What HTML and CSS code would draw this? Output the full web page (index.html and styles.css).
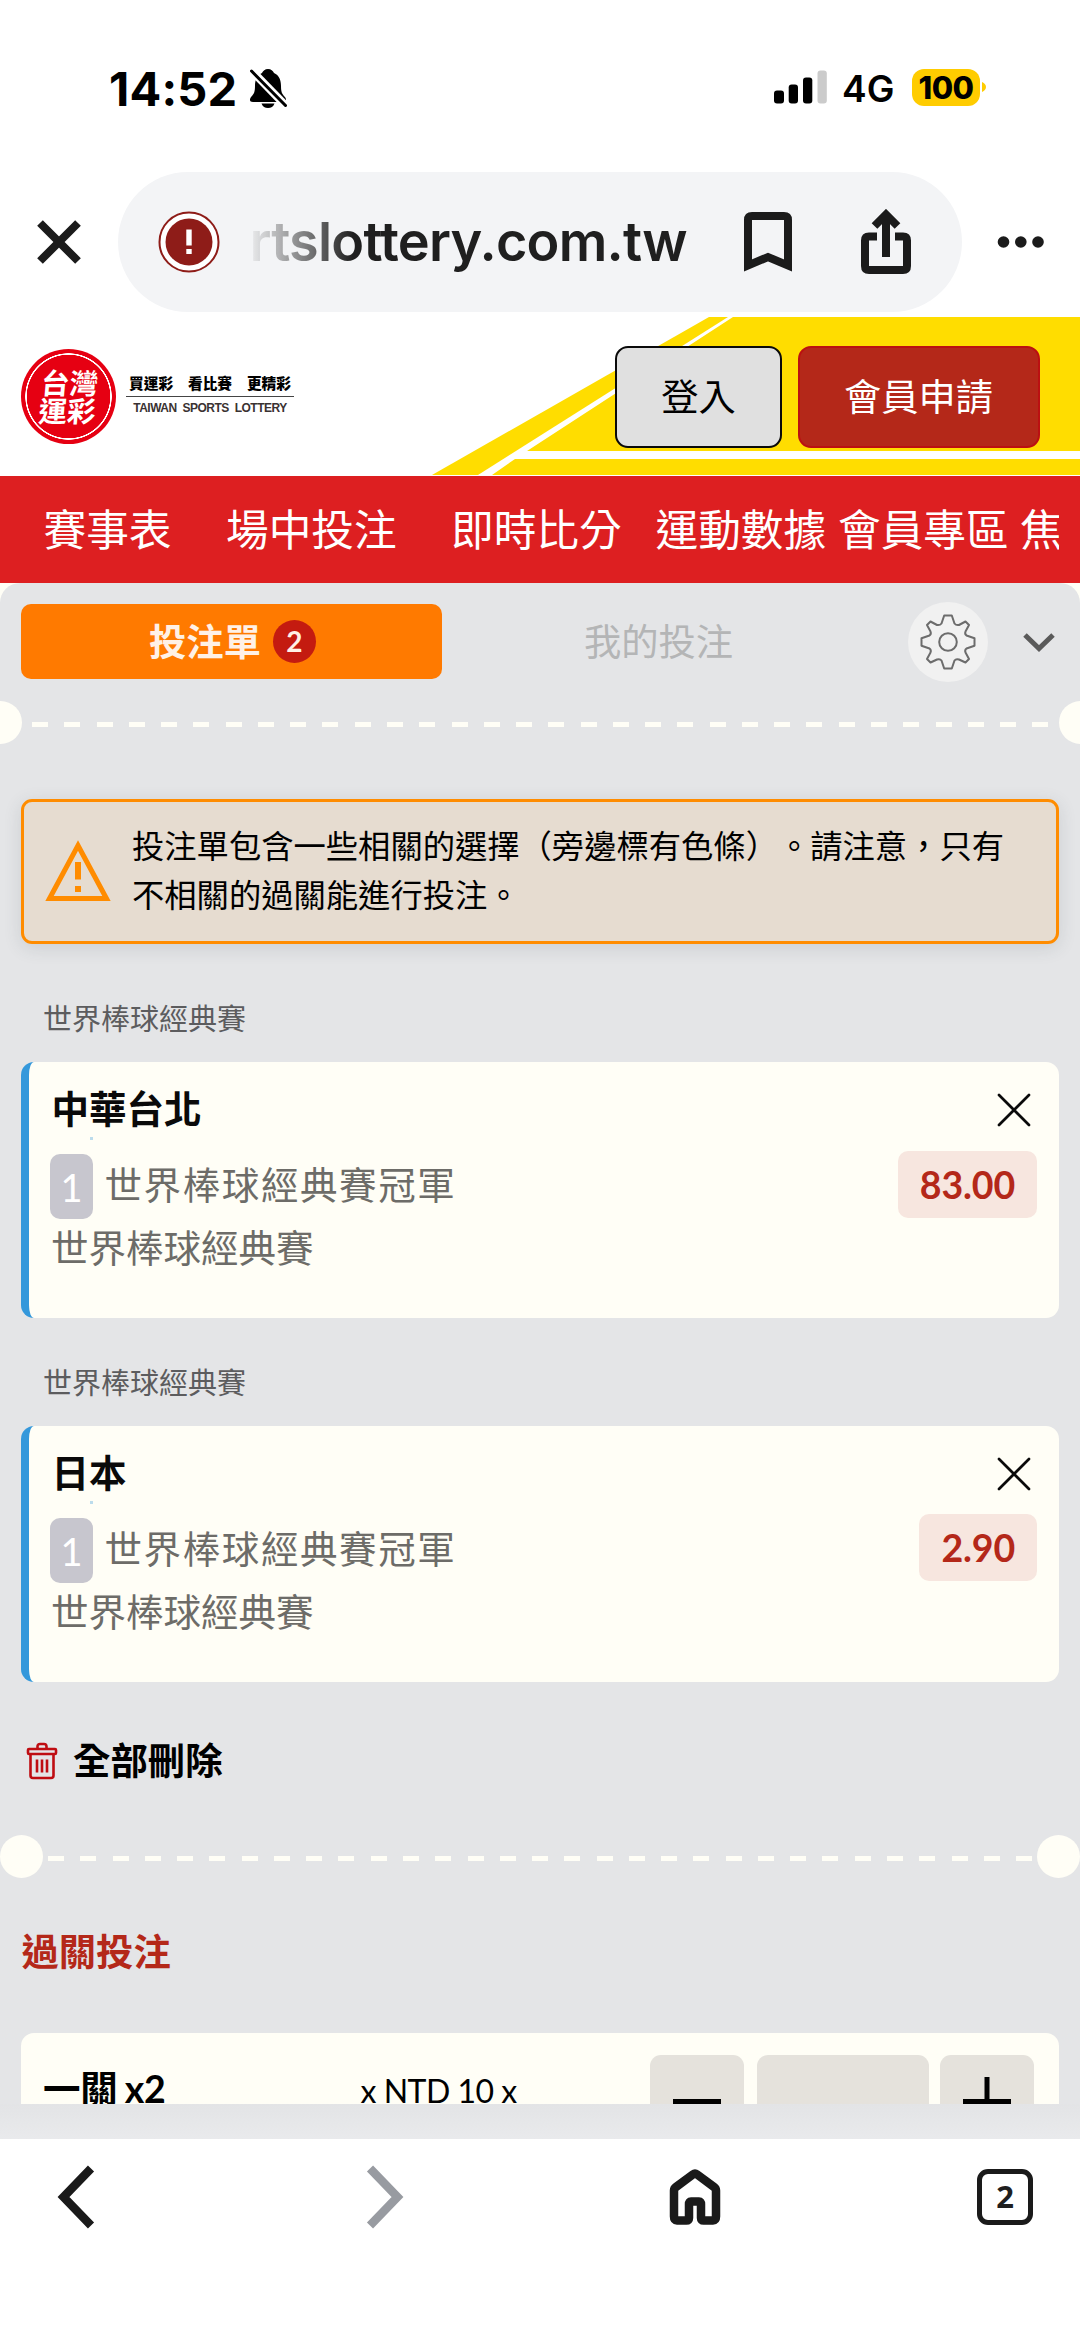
FILE: index.html
```html
<!DOCTYPE html>
<html lang="zh-Hant">
<head>
<meta charset="utf-8">
<title>台灣運彩</title>
<link rel="stylesheet" href="styles.css">
</head>
<body>
<div class="status">
  <span class="clock">14:52</span>
  <svg class="bell" width="38" height="40" viewBox="0 0 38 40"><path d="M19 1c-3 0-5 2-6 4-5 2-7 7-7 13 0 6-1 8-4 11-2 3-1 5 2 5h30c3 0 4-2 2-5-3-3-4-5-4-11 0-6-2-11-7-13-1-2-3-4-6-4z"/><path d="M12.500 35.500h13c-1 3-3.500 4.500-6.500 4.500s-5.500-1.500-6.500-4.500z"/><path class="bell-gap" d="M1 1l37 38"/><path class="bell-slash" d="M2.500 3l34 34.500"/></svg>
  <svg class="signal" width="54" height="34" viewBox="0 0 54 34"><rect y="20.500" width="10" height="13" rx="3"/><rect x="14.700" y="14.500" width="9.300" height="19" rx="3"/><rect x="29" y="7.500" width="9.300" height="26" rx="3"/><rect class="dim" x="43.500" y=".5" width="9.300" height="33" rx="3"/></svg>
  <span class="network">4G</span>
  <span class="battery">100</span>
  <svg class="nub" width="4" height="10" viewBox="0 0 4 10"><path d="M0 0q4 2 4 5t-4 5z"/></svg>
</div>

<div class="browser-bar">
  <svg class="close-tab" width="44" height="44" viewBox="0 0 44 44"><path d="M3 3l38 38M41 3L3 41"/></svg>
  <div class="address">
    <svg width="62" height="62" viewBox="0 0 62 62"><circle class="ring" cx="31" cy="31" r="29.500"/><circle class="disc" cx="31" cy="31" r="23.500"/><path class="bang" d="M28.300 18.500h5.400v16h-5.400zM28.300 38h5.400v5h-5.400z"/></svg>
    <span class="url">rtslottery.com.tw</span>
    <svg class="ink bookmark" width="50" height="62" viewBox="0 0 50 62"><path d="M5 54.500V9q0-4 4-4h32q4 0 4 4v45.500L25 46z"/></svg>
    <svg class="ink share" width="52" height="66" viewBox="0 0 52 66"><path d="M17 27.500H9q-4 0-4 4V57q0 4 4 4h34q4 0 4-4V31.500q0-4-4-4h-8M26 48V8M14.500 17L26 5.500 37.500 17"/></svg>
  </div>
  <svg class="more" width="48" height="14" viewBox="0 0 48 14"><circle cx="6.500" cy="7" r="5.800"/><circle cx="23.800" cy="7" r="5.800"/><circle cx="41" cy="7" r="5.800"/></svg>
</div>

<header class="site-header">
  <svg class="banner" width="648" height="158" viewBox="0 0 648 158"><path d="M0 158L277 0h19L46 158z"/><path d="M60 158l23-16h565v16zM95 134L301 0h347v134z"/></svg>
  <div class="brand">
    <div class="seal"><span>台灣<br>運彩</span></div>
    <div class="tagline">
      <div class="slogan"><span>買運彩</span><span>看比賽</span><span>更精彩</span></div>
      <div class="english">TAIWAN SPORTS LOTTERY</div>
    </div>
  </div>
  <div class="account">
    <button class="login">登入</button>
    <button class="join">會員申請</button>
  </div>
</header>

<nav class="menu"><a>賽事表</a><a>場中投注</a><a>即時比分</a><a>運動數據</a><a>會員專區</a><a>焦</a></nav>

<div class="viewport">
<main class="slip">
  <div class="tabs">
    <div class="tab active">投注單<span class="count">2</span></div>
    <div class="tab">我的投注</div>
    <div class="gear"><svg width="56" height="56" viewBox="-28 -28 56 56"><path d="M-3.800-26.500H3.800L6.500-18.500Q8-16.500 11-17L17.500-20.500 21-17 17.500-10.500Q16.500-8 18.500-6.500L26.500-3.800V3.800L18.500 6.500Q16.500 8 17.500 10.500L21 17 17.500 20.500 11 17.500Q8 16.500 6.500 18.500L3.800 26.500H-3.800L-6.500 18.500Q-8 16.500-11 17.500L-17.500 20.500-21 17-17.500 10.500Q-16.500 8-18.500 6.500L-26.500 3.800V-3.800L-18.500-6.500Q-16.500-8-17.500-10.500L-21-17-17.500-20.500-11-17Q-8-16.500-6.500-18.500Z"/><circle r="8.800"/></svg></div>
    <svg class="collapse" width="34" height="20" viewBox="0 0 34 20"><path d="M3 3l14 13.500L31 3"/></svg>
  </div>

  <div class="perforation edge"><i></i><b></b><i></i></div>

  <div class="notice">
    <svg width="66" height="62" viewBox="0 0 66 62"><path class="tri" d="M33 5.500L61.500 58.500H4.500z"/><path class="mark" d="M30 22h6v17.500h-6zM30 46h6v6h-6z"/></svg>
    <p>投注單包含一些相關的選擇（旁邊標有色條）。請注意，只有不相關的過關能進行投注。</p>
  </div>

  <div class="league">世界棒球經典賽</div>
  <section class="pick">
    <div class="info">
      <h3>中華台北</h3>
      <span class="speck"></span>
      <div class="market"><span class="num">1</span>世界棒球經典賽冠軍</div>
      <div class="event">世界棒球經典賽</div>
    </div>
    <div class="side">
      <svg width="34" height="34" viewBox="0 0 34 34"><path d="M2 2l30 30M32 2L2 32"/></svg>
      <span class="odds">83.00</span>
    </div>
  </section>

  <div class="league">世界棒球經典賽</div>
  <section class="pick">
    <div class="info">
      <h3>日本</h3>
      <span class="speck"></span>
      <div class="market"><span class="num">1</span>世界棒球經典賽冠軍</div>
      <div class="event">世界棒球經典賽</div>
    </div>
    <div class="side">
      <svg width="34" height="34" viewBox="0 0 34 34"><path d="M2 2l30 30M32 2L2 32"/></svg>
      <span class="odds">2.90</span>
    </div>
  </section>

  <div class="clear-all">
    <svg width="32" height="38" viewBox="0 0 32 38"><rect x="2" y="7" width="28" height="5" rx="1"/><path d="M11.500 7V4.500q0-2.500 2.500-2.500h4q2.500 0 2.500 2.500V7M4.500 12v21.500q0 2.500 2.500 2.500h18q2.500 0 2.500-2.500V12M11 17.500v13M16 17.500v13M21 17.500v13"/></svg>
    全部刪除
  </div>

  <div class="perforation"><i></i><b></b><i></i></div>

  <h2>過關投注</h2>
  <section class="stake">
    <strong>一關 x2</strong>
    <span class="unit">x NTD 10 x</span>
    <span class="step"><svg width="48" height="48" viewBox="0 0 48 48"><path d="M0 24.500h48"/></svg></span>
    <span class="amount"></span>
    <span class="step"><svg width="48" height="48" viewBox="0 0 48 48"><path d="M0 24.500h48M24 0v48"/></svg></span>
  </section>
</main>
</div>
<div class="fade"></div>

<footer class="browser-nav">
  <svg width="38" height="64" viewBox="0 0 38 64"><path d="M34 3.500L6.500 32 34 60.500"/></svg>
  <svg class="off" width="38" height="64" viewBox="0 0 38 64"><path d="M4 3.500L31.500 32 4 60.500"/></svg>
  <svg class="home" width="52" height="58" viewBox="0 0 52 58"><path d="M8 52.500q-3 0-3-4V22.500q0-2 2-3.500L24 6.300q2-1.500 4 0L45 19q2 1.500 2 3.500v26q0 4-3 4H34.500q-2.500 0-2.500-2.500V36q0-2.500-2-2.500H22q-2 0-2 2.500v14q0 2.500-2.500 2.500z"/></svg>
  <span class="tab-count">2</span>
</footer>
</body>
</html>
```
FILE: styles.css
```css
* { box-sizing: border-box; }

body {
  margin: 0;
  width: 1080px;
  height: 2348px;
  overflow: hidden;
  background: #fff;
  color: #000;
  font-family: Lato, "Noto Sans CJK TC", sans-serif;
}

svg { display: block; flex: none; }

/* phone status bar */
.status {
  display: flex;
  align-items: flex-start;
  height: 172px;
  padding-top: 64px;
  padding-left: 109px;
  font-family: Inter, sans-serif;
}
.clock { width: 140px; font-size: 47px; line-height: 49px; font-weight: 750; letter-spacing: .2px; white-space: nowrap; }
.bell { margin-top: 4px; }
.bell-gap { stroke: #fff; stroke-width: 8; }
.bell-slash { stroke: #000; stroke-width: 3; stroke-linecap: round; }
.signal { margin: 6px 14px 0 487px; }
.signal .dim { fill: #cbcbcb; }
.network { width: 70px; margin-top: 1px; font-size: 37px; line-height: 48px; font-weight: 600; }
.battery {
  width: 68px;
  height: 37px;
  margin-top: 5px;
  border-radius: 12px;
  background: #ffcc00;
  font-size: 31px;
  line-height: 37px;
  font-weight: 800;
  text-align: center;
  letter-spacing: -0.5px;
}
.nub { margin: 18px 0 0 2px; fill: #ffcc00; }

/* address bar */
.browser-bar { display: flex; align-items: center; height: 140px; padding-left: 37px; }
.close-tab path { stroke: #1b1b1b; stroke-width: 8; }
.address {
  display: flex;
  align-items: center;
  width: 844px;
  height: 140px;
  margin-left: 37px;
  padding-left: 39.500px;
  border-radius: 70px;
  background: #f3f4f6;
}
.ring { fill: #fff; stroke: #8e1c18; stroke-width: 2; }
.disc { fill: #8e1c18; }
.bang { fill: #fff; }
.url {
  width: 494px;
  padding-left: 30px;
  font-family: Inter, sans-serif;
  font-size: 54px;
  line-height: 70px;
  font-weight: 600;
  letter-spacing: -.75px;
  white-space: nowrap;
  color: transparent;
  background: linear-gradient(90deg, rgba(31,31,31,0) 26px, #1f1f1f 133px);
  background-clip: text;
  -webkit-background-clip: text;
}
.ink path { fill: none; stroke: #1b1b1b; stroke-width: 8; }
.bookmark { margin-left: 29px; }
.share { margin-left: 67px; }
.more { margin-left: 34.500px; fill: #1b1b1b; }

/* site header */
.site-header {
  position: relative;
  display: flex;
  justify-content: space-between;
  height: 158.500px;
  margin-top: 5px;
  padding: 28.500px 40.500px 0 21px;
}
.banner { position: absolute; right: 0; top: 0; fill: #ffdd00; }
.brand { display: flex; padding-top: 3.500px; }
.seal {
  display: grid;
  place-items: center;
  width: 95px;
  height: 95px;
  border-radius: 50%;
  background: radial-gradient(circle, #e60012 41.500px, #fff 42px, #fff 43px, #e60012 43.500px);
  color: #fff;
  font-size: 28.500px;
  line-height: 28px;
  font-weight: 700;
}
.seal span { transform: skewX(-5deg); }
.tagline { width: 168px; margin-left: 10px; padding-top: 23px; }
.slogan {
  display: flex;
  justify-content: space-between;
  height: 25px;
  padding: 0 3px;
  border-bottom: 1.500px solid #444;
  font-size: 14.700px;
  line-height: 22px;
  font-weight: 900;
}
.english {
  font: 700 12px/23px "Liberation Sans", Arial, sans-serif;
  letter-spacing: -.5px;
  color: #3a3232;
  text-align: center;
  white-space: nowrap;
  word-spacing: 3px;
}
.account { position: relative; display: flex; gap: 15.500px; }
.account button {
  height: 102.500px;
  padding: 0 0 3px;
  border-radius: 13px;
  font-family: "Noto Sans CJK TC", sans-serif;
  font-size: 37.200px;
}
.login { width: 167px; border: 2.500px solid #0a0a0a; background: #e0e0e0; color: #000; }
.join { width: 242px; border: 2.500px solid #bb1011; background: #b42819; color: #fff; }

.menu {
  display: flex;
  width: 1080px;
  height: 107.500px;
  padding-left: 43.500px;
  background: #dd1f21;
  color: #fff;
  font-size: 42.700px;
  line-height: 107px;
  white-space: nowrap;
}
.menu a:nth-child(1) { width: 182.500px; }
.menu a:nth-child(2) { width: 225px; }
.menu a:nth-child(3) { width: 204.500px; }
.menu a:nth-child(4) { width: 182.500px; }
.menu a:nth-child(5) { width: 182px; }
.menu a:nth-child(6) { width: 39px; overflow: hidden; }

/* bet slip */
.viewport { height: 1521px; overflow: hidden; background: #fffef6; }
.slip { height: 1560px; border-radius: 20px 20px 0 0; background: #e4e5e7; }
.tabs { display: flex; align-items: center; height: 117.500px; padding-left: 21px; }
.tab {
  display: flex;
  align-items: center;
  justify-content: center;
  width: 421px;
  height: 75px;
  color: #b4b5b6;
  font-size: 37.300px;
  line-height: 73px;
}
.tab + .tab { width: 433px; }
.tab.active { padding-left: 2px; border-radius: 10px; background: #ff7a00; color: #fff1e6; font-weight: 700; }
.count {
  width: 43px;
  height: 43px;
  margin: 0 0 0 12px;
  border-radius: 50%;
  background: #c41b10;
  font-size: 28px;
  line-height: 42px;
  font-weight: 700;
  text-align: center;
}
.gear {
  display: grid;
  place-items: center;
  width: 80px;
  height: 80px;
  margin-left: 33px;
  border-radius: 50%;
  background: #f1f1f1;
}
.gear svg { fill: none; stroke: #6c6c6c; stroke-width: 2; stroke-linejoin: round; }
.collapse { margin-left: 33.500px; fill: none; stroke: #5a5a5a; stroke-width: 5; }

.perforation { display: flex; align-items: center; justify-content: space-between; height: 43px; }
.perforation i { width: 43px; height: 43px; border-radius: 50%; background: #fffef6; }
.perforation b {
  width: 984px;
  height: 5.500px;
  margin-top: 5px;
  background: repeating-linear-gradient(90deg, #fffef6 0 16px, transparent 16px 32.270px);
}
.perforation.edge { overflow: hidden; }
.perforation.edge i { margin: 0 -21.500px; }
.perforation.edge b { width: 1016px; }

.notice {
  display: flex;
  align-items: center;
  height: 145px;
  margin: 55px 21.500px 0 21px;
  padding: 0 20px 0 21px;
  border: 3px solid #ff8c00;
  border-radius: 11px;
  background: #e6dcd0;
  box-shadow: 0 4px 18px rgba(60, 70, 80, .14);
}
.tri { fill: none; stroke: #ff8c00; stroke-width: 5; }
.mark { fill: #ff8c00; }
.notice p {
  width: 900px;
  margin: -1px 0 0 21px;
  font-size: 32.300px;
  line-height: 48.500px;
  text-spacing-trim: space-all;
  font-feature-settings: "chws" 0, "halt" 0;
}

.league { margin: 51.500px 0 0 43px; height: 50px; color: #5c5c5e; font-size: 29px; line-height: 47px; }
.pick {
  display: flex;
  justify-content: space-between;
  height: 256px;
  margin: 17px 21.500px 0 21px;
  border-left: 8.500px solid #3498db;
  border-radius: 13px;
  background: #fffef6;
}
.pick + .league { margin-top: 40.500px; }
.info { padding: 20px 0 0 21px; font-size: 37.500px; color: #6d6c68; }
.info h3 { height: 55px; margin: 0 0 0 1.500px; color: #0a0a0a; font-size: 37.500px; line-height: 54px; font-weight: 700; }
.speck { display: block; width: 3px; height: 3px; margin-left: 40px; background: #bcdcec; }
.market { display: flex; height: 65px; margin-top: 14px; line-height: 62px; letter-spacing: 1.600px; }
.num {
  width: 43px;
  margin-right: 11.500px;
  border-radius: 10px;
  background: #c7c6ce;
  color: #fff;
  font-size: 38px;
  line-height: 67px;
  letter-spacing: 0;
  text-align: center;
}
.event { margin-left: 1px; line-height: 57px; }
.side { display: flex; flex-direction: column; align-items: flex-end; padding: 31px 21.500px 0 0; }
.side svg { margin-right: 6px; fill: none; stroke: #0a0a0a; stroke-width: 2.700; stroke-linecap: round; }
.odds {
  height: 67px;
  margin-top: 23.500px;
  padding: 0 22px;
  border-radius: 10px;
  background: #f7e6df;
  color: #b42819;
  font-size: 37.500px;
  letter-spacing: -.15px;
  line-height: 68px;
  font-weight: 700;
}

.clear-all {
  display: flex;
  align-items: center;
  gap: 15px;
  height: 60px;
  margin: 49.500px 0 43.500px 26px;
  font-size: 37.400px;
  line-height: 56px;
  font-weight: 700;
}
.clear-all svg { fill: none; stroke: #bf0d12; stroke-width: 2.600; }
h2 { height: 56px; margin: 46px 0 0 21.500px; color: #b42819; font-size: 37.300px; line-height: 55px; font-weight: 700; }

.stake {
  display: flex;
  align-items: flex-start;
  height: 130px;
  margin: 53px 21.500px 0 21px;
  padding: 22px 0 0 22px;
  border-radius: 13px 13px 0 0;
  background: #fffef6;
}
.stake strong { width: 317.500px; font-size: 37.500px; line-height: 67px; letter-spacing: -.3px; word-spacing: -1.500px; }
.unit { width: 289px; font-size: 32px; line-height: 72px; letter-spacing: -.5px; white-space: nowrap; }
.step, .amount { width: 94px; height: 94px; border-radius: 11px; background: #e5e2dc; }
.step { display: grid; justify-content: center; padding-top: 22px; }
.step path { stroke: #000; stroke-width: 5; }
.amount { width: 172px; margin: 0 10.500px 0 13.500px; }
.fade { height: 34.500px; background: linear-gradient(#e3e4e6, #e9eaec); }

/* browser toolbar */
.browser-nav { display: flex; align-items: center; height: 117px; padding-left: 56.500px; }
.browser-nav path { fill: none; stroke: #1a1a1a; stroke-width: 8.500; }
.browser-nav .off { margin: 0 265.500px 0 271px; }
.browser-nav .off path { stroke: #989ba1; }
.tab-count {
  width: 56px;
  height: 56px;
  margin-left: 256px;
  border: 5.500px solid #1a1a1a;
  border-radius: 11px;
  color: #1f1f1f;
  font: 700 31px/45px "Noto Sans", sans-serif;
  text-align: center;
}
```
